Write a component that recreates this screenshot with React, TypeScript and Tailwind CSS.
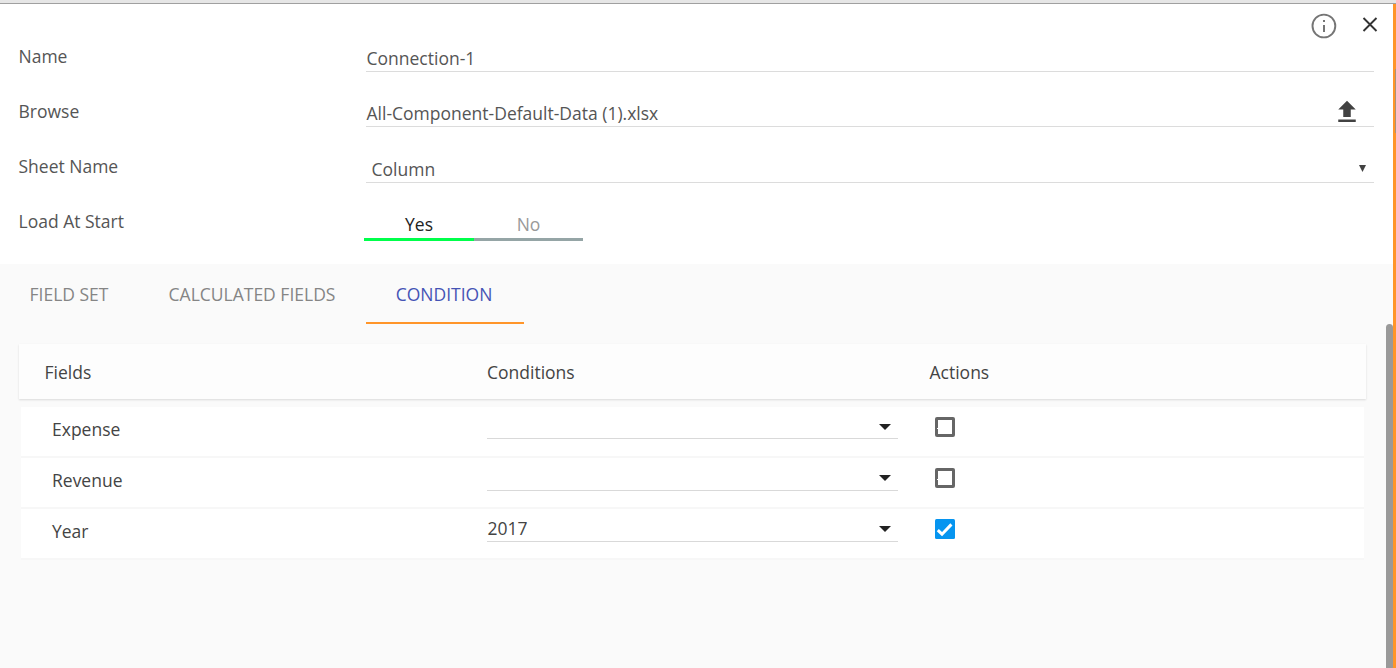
import type { ReactNode } from "react";

function Field({ label, children }: { label: string; children: ReactNode }) {
  return (
    <div className="flex h-[55px] items-start">
      <div className="w-[347.5px] shrink-0 pt-3 text-[#555]">{label}</div>
      {children}
    </div>
  );
}

function Caret() {
  return (
    <svg className="mr-[7px] h-[6px] w-3" viewBox="0 0 12 6" fill="#222">
      <path d="M0 0h12L6 6z" />
    </svg>
  );
}

function Checkbox({ checked }: { checked: boolean }) {
  return checked ? (
    <svg className="size-5" viewBox="0 0 20 20">
      <rect width="20" height="20" rx="1.5" fill="#0695f0" />
      <path d="M2.8 11.2L7 15.2L16.4 5.4" fill="none" stroke="#fff" strokeWidth="3" />
    </svg>
  ) : (
    <svg className="size-5" viewBox="0 0 20 20">
      <rect width="20" height="20" rx="2" fill="#666" />
      <path d="M3 3h14v14H3z M2 11h1v1H2z" fill="#fff" />
    </svg>
  );
}

const rows = [
  { name: "Expense", value: "", checked: false, height: "h-8" },
  { name: "Revenue", value: "", checked: false, height: "h-[33px]" },
  { name: "Year", value: "2017", checked: true, height: "h-[33px]" },
];

export default function App() {
  return (
    <div className="flex h-[668px] w-[1396px] flex-col overflow-hidden bg-white font-['Open_Sans',sans-serif] text-[17.5px] leading-6">
      <div className="h-1 shrink-0 border-b border-[#a0a0a0] bg-[#e6e6e6]" />
      <div className="flex min-h-0 flex-1">
        <div className="relative flex min-w-0 flex-1 flex-col">
          <header className="h-[260px] shrink-0 pt-7 pl-[18.5px]">
            <Field label="Name">
              <div className="h-10 w-[1008px] border-b border-[#dcdcdc] pt-[14px] pl-[0.5px] text-[#555]">Connection-1</div>
            </Field>
            <Field label="Browse">
              <div className="flex h-10 w-[1008px] justify-between border-b border-[#dcdcdc] pt-[10px] pl-[0.5px] text-[#555]">
                <span className="pt-1">All-Component-Default-Data (1).xlsx</span>
                <svg className="mr-[12.4px] size-[30px]" viewBox="0 0 24 24" fill="#424242">
                  <path d="M5 20h14v-2H5v2zM9 16h6v-6h4l-7-7-7 7h4v6z" />
                </svg>
              </div>
            </Field>
            <Field label="Sheet Name">
              <div className="flex h-[41px] w-[1008px] justify-between border-b border-[#dcdcdc] pt-[15px] pl-[5.5px] text-[#555]">
                <span>Column</span>
                <svg className="mt-2 mr-2 h-[7px] w-[7px]" viewBox="0 0 7 7" fill="#424242">
                  <path d="M0 0h7L3.5 7z" />
                </svg>
              </div>
            </Field>
            <Field label="Load At Start">
              <div className="-ml-0.5 flex w-[219px] text-center">
                <div className="h-[44px] w-[109.5px] border-b-[3px] border-[#00ff4b] pt-[15px] pl-[0.5px] text-[#222]">Yes</div>
                <div className="h-[44px] w-[109.5px] border-b-[3px] border-[#95a5a6] pt-[15px] pl-[0.5px] text-[#999]">No</div>
              </div>
            </Field>
          </header>
          <div className="absolute top-[8px] right-[15px] flex items-start">
            <svg className="size-[28px]" viewBox="0 0 28 28" fill="none" stroke="#757575">
              <circle cx="14.9" cy="14" r="11.4" strokeWidth="1.9" />
              <path d="M15 8v2M15 13v7" strokeWidth="2" />
            </svg>
            <svg className="mt-1 ml-[25px] size-4" viewBox="0 0 16 16" fill="none" stroke="#333" strokeWidth="1.9">
              <path d="M1.5 2l13 13M14.5 2l-13 13" />
            </svg>
          </div>
          <div className="flex min-h-0 flex-1 bg-[#fafafa]">
            <main className="min-w-0 flex-1">
              <nav className="flex h-[60px] pt-[18px] text-[#858585]">
                <div className="w-[138px] text-center">FIELD SET</div>
                <div className="w-[228px] text-center">CALCULATED FIELDS</div>
                <div className="w-[158px] border-b-2 border-[#ff9529] pr-[2px] text-center text-[#4553b5]">CONDITION</div>
              </nav>
              <section className="mt-5 ml-[19px] w-[1347px] text-[#444]">
                <div className="flex h-[55px] bg-[#fdfdfd] pt-4 pl-[25.5px] shadow-[0_1px_2px_rgba(0,0,0,0.13)]">
                  <div className="w-[442.5px]">Fields</div>
                  <div className="w-[442.5px]">Conditions</div>
                  <div>Actions</div>
                </div>
                <div className="mt-2 mr-0.5 ml-0.5">
                  {rows.map((row) => (
                    <div key={row.name} className="flex h-[51px] border-b-2 border-[#f7f7f7] bg-white pl-[31px]">
                      <div className="w-[435px] pt-[10px]">{row.name}</div>
                      <div className={`flex w-[411px] items-start justify-between border-b border-[#d9d9d9] ${row.height}`}>
                        <span className="pt-[7px] pl-[0.5px]">{row.value}</span>
                        <span className="pt-[17px]">
                          <Caret />
                        </span>
                      </div>
                      <div className="ml-[37px] pt-[10px]">
                        <Checkbox checked={row.checked} />
                      </div>
                    </div>
                  ))}
                </div>
              </section>
            </main>
            <div className="mt-[60px] w-[7px] rounded-t-sm bg-[#999]" />
          </div>
        </div>
        <div className="w-[3px] bg-[#ff9529] pt-[65px]">
          <div className="ml-auto h-[64px] w-px bg-[#aa9478]" />
        </div>
      </div>
    </div>
  );
}
